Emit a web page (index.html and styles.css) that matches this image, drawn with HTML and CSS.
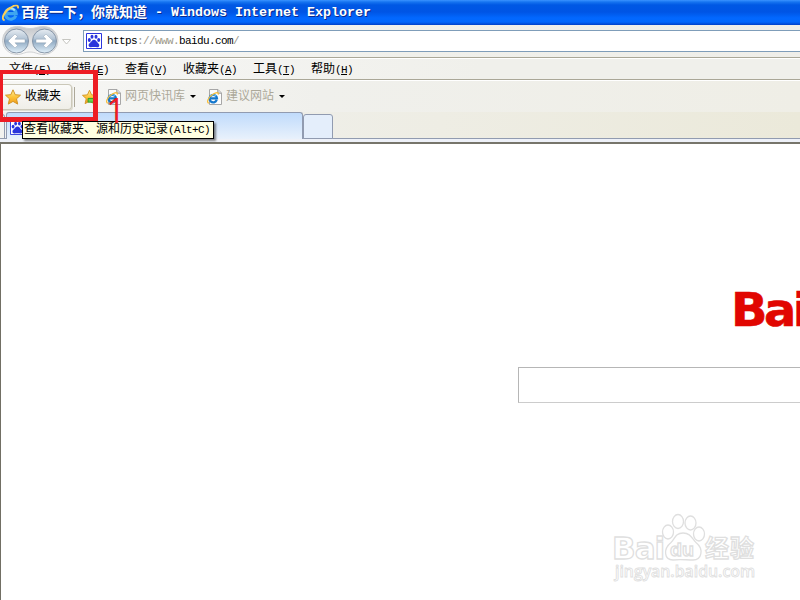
FILE: index.html
```html
<!DOCTYPE html>
<html lang="zh-CN">
<head>
<meta charset="utf-8">
<title>百度一下，你就知道</title>
<link rel="stylesheet" href="styles.css">
</head>
<body>
<svg width="0" height="0" class="defs">
  <defs>
    <linearGradient id="gold" x2="0" y2="1"><stop offset="0" stop-color="#fff2a0"/><stop offset=".5" stop-color="#fdc43a"/><stop offset="1" stop-color="#f09a18"/></linearGradient>
    <linearGradient id="orb" x2="0" y2="1"><stop offset="0" stop-color="#e9eef3"/><stop offset=".4" stop-color="#b4c5d6"/><stop offset=".5" stop-color="#8fa9c2"/><stop offset="1" stop-color="#e2f1fb"/></linearGradient>
    <linearGradient id="pill" x2="0" y2="1"><stop offset="0" stop-color="#c4c6ca"/><stop offset=".6" stop-color="#e6e7e8"/><stop offset="1" stop-color="#fafafa"/></linearGradient>
    <symbol id="ie" viewBox="0 0 16 16">
      <path d="M13 10.600A5 5 0 1 1 13.300 8.500H4.500" fill="none" stroke="#1477cc" stroke-width="3"/>
      <path d="M4 6A5 5 0 0 1 12 5.500" fill="none" stroke="#6cc8f7" stroke-width="1.400"/>
      <path d="M2.500 14.800C-1.500 14 2 6.400 8 3 12 .4 15.800-.3 15 3.600" fill="none" stroke="#f8bd36" stroke-width="1.600"/>
    </symbol>
    <symbol id="ie-light" viewBox="0 0 16 16">
      <path d="M13 10.600A5 5 0 1 1 13.300 8.500H4.500" fill="none" stroke="#3ea6f0" stroke-width="3"/>
      <path d="M4 6A5 5 0 0 1 12 5.500" fill="none" stroke="#a8e2ff" stroke-width="1.600"/>
      <path d="M2.500 14.800C-1.500 14 2 6.400 8 3 12 .4 15.800-.3 15 3.600" fill="none" stroke="#fbcf58" stroke-width="1.800"/>
    </symbol>
    <symbol id="paw" viewBox="0 0 16 16">
      <path d="M.5.5h15v15H.5z" fill="#fff" stroke="#2a35dc"/>
      <g fill="#2a35dc"><ellipse cx="3.300" cy="7" rx="1.500" ry="2"/><ellipse cx="6" cy="3.800" rx="1.500" ry="2"/><ellipse cx="10" cy="3.800" rx="1.500" ry="2"/><ellipse cx="12.700" cy="7" rx="1.500" ry="2"/><path d="M8 6.800c2 0 2.500 2 4.200 3.400 2 1.800 1 4.300-1 4.100-2-.3-4.400-.3-6.400 0-2.300.2-3-2.600-1-4.200C5.500 8.800 6 6.800 8 6.800z"/></g>
    </symbol>
    <symbol id="star" viewBox="0 0 16 16"><path d="M8 .8l2.200 4.900 5.300.5-4 3.600 1.200 5.300L8 12.400l-4.700 2.700 1.200-5.300-4-3.600 5.300-.5z" fill="url(#gold)" stroke="#d29526" stroke-linejoin="round"/></symbol>
    <symbol id="page" viewBox="0 0 16 16"><path d="M2.500.5h8.500l3.500 3.500v11.500h-12z" fill="#fcfcfc" stroke="#a7a7a7"/><path d="M10.800.7v3.500h3.500" fill="#ddd" stroke="#999"/><svg x="0" y="3" width="12" height="12"><use href="#ie"/></svg></symbol>
  </defs>
</svg>
<div class="window">
  <header class="title">
    <svg class="title-icon" viewBox="0 0 16 16"><use href="#ie-light"/></svg>
    <span class="title-cn">百度一下，你就知道</span><span class="title-en">&nbsp;- Windows Internet Explorer</span>
  </header>
  <div class="nav">
    <svg class="travel" viewBox="0 0 82 32">
      <path d="M16.500 1.500C23 1.500 24 3.500 30 3.500S37 1.500 44 1.500A14 14 0 0 1 44 29.500C37 29.500 36 27 30 27S23 29.500 16.500 29.500A14 14 0 0 1 16.500 1.500z" fill="url(#pill)" stroke="#d0d2d4"/>
      <circle cx="16.500" cy="16" r="12" fill="url(#orb)" stroke="#8796a8"/><circle cx="44.500" cy="16" r="12" fill="url(#orb)" stroke="#8796a8"/>
      <path d="M8 16l7-7 2.500 2.500-2.500 2.700h10v3.600H15l2.500 2.700L15 23zM53 16l-7-7-2.500 2.500 2.500 2.700H36v3.600h10l-2.500 2.700L46 23z" fill="#fff" stroke="#8797a8" stroke-width=".4"/>
      <path d="M62.500 14.500h8l-4 4.500z" fill="#fff" stroke="#c6c6c1"/>
    </svg>
    <div class="address"><svg class="paw" viewBox="0 0 16 16"><use href="#paw"/></svg><span class="url">https<i>://www.</i>baidu.com<i>/</i></span></div>
  </div>
  <nav class="menu">
    <span>文件<b>(<u>F</u>)</b></span><span>编辑<b>(<u>E</u>)</b></span><span>查看<b>(<u>V</u>)</b></span><span class="wide">收藏夹<b>(<u>A</u>)</b></span><span>工具<b>(<u>T</u>)</b></span><span>帮助<b>(<u>H</u>)</b></span>
  </nav>
  <div class="favorites">
    <div class="fav-button"><svg viewBox="0 0 16 16"><use href="#star"/></svg><span>收藏夹</span></div>
    <div class="separator"></div>
    <svg class="add" viewBox="0 0 16 16"><use href="#star"/><path d="M6.500 9.500h9v4h-9z" fill="#6bd14a" stroke="#2c9a25"/></svg>
    <div class="link feed"><svg viewBox="0 0 16 16"><use href="#page"/></svg><span>网页快讯库</span><em></em></div>
    <div class="link"><svg viewBox="0 0 16 16"><use href="#page"/></svg><span>建议网站</span><em></em></div>
  </div>
  <div class="tabs"><div class="tab-stub"></div><div class="tab"><svg class="tab-icon" viewBox="0 0 16 16"><use href="#paw"/></svg></div><div class="new-tab"></div></div>
  <div class="tab-base"></div>
  <main class="content">
    <div class="logo">Bai</div>
    <div class="search"></div>
    <svg class="watermark" viewBox="0 0 160 80">
      <g fill="#fff" stroke="#dfdfdf" stroke-width="1.300">
        <text x="1" y="49" class="wm-name">Bai</text>
        <ellipse cx="57" cy="22" rx="5.500" ry="7"/><ellipse cx="67" cy="11.500" rx="5.500" ry="7"/><ellipse cx="79.500" cy="13" rx="5.500" ry="7"/><ellipse cx="88" cy="24" rx="5.500" ry="7"/>
        <path d="M72 23c8 0 9 6 13 9.500 8 6.500 6 17.500-3 17.500-7 0-13-1-20 0-9 0-10-11-2-17.500 4-3.500 4-9.500 12-9.500z"/>
        <text x="59" y="46" class="wm-du" textLength="24" lengthAdjust="spacingAndGlyphs">du</text>
        <text x="94" y="47" class="wm-cn" textLength="49">经验</text>
      </g>
      <text x="4" y="67" class="wm-url" textLength="140" lengthAdjust="spacingAndGlyphs" fill="#fff" stroke="#dfdfdf" stroke-width=".9">jingyan.baidu.com</text>
    </svg>
  </main>
</div>
<div class="step">1</div>
<div class="red-frame"></div>
<div class="tooltip">查看收藏夹、源和历史记录<b>(Alt+C)</b></div>
</body>
</html>
```
FILE: styles.css
```css
* { box-sizing: border-box; }
body { margin: 0; width: 800px; height: 600px; overflow: hidden; background: #fff; font: 12px/16px "Liberation Sans", "Noto Sans CJK SC", sans-serif; color: #000; }
svg { display: block; flex: none; }
.defs { position: absolute; }
.window { width: 800px; height: 600px; display: flex; flex-direction: column; }
.title { height: 25px; flex: none; display: flex; align-items: center; padding-left: 2px; white-space: pre; color: #fff; font-weight: bold; text-shadow: 1px 1px #0a2a8c; background: linear-gradient(#3b93ff 0, #1674f0 2px, #0058e4 5px, #0055e5 12px, #0268ff 18px, #0267fc 22px, #0040c8 25px); }
.title-icon { width: 17px; height: 18px; margin-right: 2px; }
.title-cn { font: bold 14px/20px "Noto Sans CJK SC", sans-serif; width: 126px; padding-bottom: 3px; }
.title-en { font: bold 13.33px/20px "Liberation Mono", monospace; }
.nav { height: 34px; flex: none; display: flex; align-items: flex-start; background: linear-gradient(90deg, #fafafa, #f0f0eb 50%, #efeee9); border-bottom: 1px solid #fff; box-shadow: inset 0 -1px #aaa797; }
.travel { width: 82px; height: 32px; }
.address { flex: 1; height: 22px; margin: 5px 0 0 1px; border: 1px solid #7f9db9; border-right: 0; background: #fff; display: flex; align-items: center; }
.paw { width: 16px; height: 16px; margin: 0 5px 0 2px; }
.url { font: 11px/18px "Liberation Mono", monospace; letter-spacing: -.6px; white-space: pre; }
.url i { font-style: normal; color: #9c9889; }
.menu { height: 22px; flex: none; display: flex; padding: 2px 0 0 9px; background: linear-gradient(90deg, #f7f7f6, #f0f0eb 60%); border-bottom: 1px solid #fff; box-shadow: inset 0 -1px #aaa797; }
.menu span { width: 58px; white-space: nowrap; }
.menu .wide { width: 70px; }
.menu b, .tooltip b { font: 11px/16px "Liberation Mono", monospace; letter-spacing: -.6px; }
.favorites { height: 31px; flex: none; display: flex; align-items: center; background: linear-gradient(90deg, #f7f7f5, #f0f0ec 40%, #efeee6); }
.fav-button { width: 72px; height: 26px; display: flex; align-items: center; padding-left: 5px; gap: 4px; border: 1px solid #cbc8b9; border-left: 0; border-radius: 0 4px 4px 0; background: linear-gradient(#fbfbfa, #efeee8); box-shadow: 1px 1px #dedcd1; }
.fav-button svg { width: 16px; height: 16px; }
.fav-button span, .link span { margin-top: -1px; }
.separator { width: 1px; height: 20px; margin: 0 7px 0 2px; background: #aca899; }
.add { width: 15px; height: 16px; margin-right: 9px; }
.link { display: flex; align-items: center; color: #aca899; }
.link svg { width: 16px; height: 16px; margin-right: 3px; }
.link em { border: 3px solid transparent; border-top-color: #000; border-bottom: 0; margin-left: 5px; }
.feed { width: 101px; }
.tabs { height: 27px; flex: none; display: flex; align-items: flex-end; background: linear-gradient(90deg, #f0f1f0, #eeede4 55%, #ebe9da); box-shadow: inset 0 -1px #919bb0; }
.tab-stub { width: 5px; height: 25px; margin-right: 1px; border: 1px solid #919bb0; border-left: 0; border-radius: 0 3px 0 0; background: #f2f2ef; }
.tab { width: 297px; height: 27px; padding: 7px 0 0 3px; border: 1px solid #919bb0; border-bottom: 0; border-radius: 3px 3px 0 0; background: linear-gradient(#c0dbfb, #e8f1fc); }
.tab-icon { width: 15px; height: 15px; }
.new-tab { width: 30px; height: 25px; border: 1px solid #919bb0; border-radius: 3px 3px 0 0; background: #e4eefb; }
.tab-base { height: 5px; flex: none; background: #eef1f8; border-bottom: 2px solid #77756b; }
.content { flex: 1; position: relative; background: #fff; border-left: 1px solid #716f64; overflow: hidden; }
.logo { margin: 136px 0 0 730px; width: 90px; font: bold 47px/60px "DejaVu Sans", sans-serif; letter-spacing: -3.5px; color: #e10601; -webkit-text-stroke: .6px #e10601; transform: scaleX(1.02); transform-origin: left; white-space: nowrap; }
.search { margin: 27px 0 0 517px; width: 300px; height: 36px; border: 1px solid #b6b6b6; border-bottom-color: #ccc; }
.watermark { position: absolute; left: 610px; top: 366px; width: 160px; height: 80px; }
.wm-name { font: bold 31px "DejaVu Sans", sans-serif; letter-spacing: -1px; }
.wm-du { font: bold 19px "Liberation Sans", sans-serif; }
.wm-cn { font: bold 24px "Noto Sans CJK SC", sans-serif; }
.wm-url { font: 600 16px "Open Sans", sans-serif; }
.red-frame { position: absolute; left: -2px; top: 70px; width: 100px; height: 52px; border: 5px solid #ed1c24; border-top-width: 4px; }
.tooltip { position: absolute; left: 22px; top: 121px; width: 192px; height: 18px; padding-left: 1px; background: #ffffe1; border: 1px solid #000; box-shadow: 2px 2px 2px #0007; white-space: nowrap; line-height: 15px; }
.step { position: absolute; z-index: 1; left: 106px; top: 91px; font: 34px/38px "Open Sans", sans-serif; color: #ed1c24; }
```
